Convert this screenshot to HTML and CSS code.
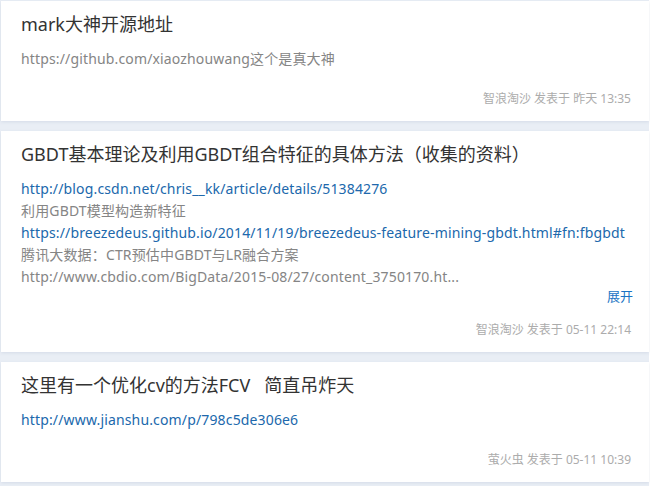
FILE: index.html
```html
<!DOCTYPE html>
<html lang="zh-CN">
<head>
<meta charset="utf-8">
<title>帖子列表</title>
<link rel="stylesheet" href="styles.css">
</head>
<body>
<div class="list">
  <div class="card">
    <div class="title">mark大神开源地址</div>
    <div class="content">
      <div class="line muted">https://github.com/xiaozhouwang这个是真大神</div>
    </div>
    <div class="meta">智浪淘沙 发表于 昨天 13:35</div>
  </div>
  <div class="card">
    <div class="title">GBDT基本理论及利用GBDT组合特征的具体方法（收集的资料）</div>
    <div class="content">
      <div class="line link">http://blog.csdn.net/chris__kk/article/details/51384276</div>
      <div class="line muted">利用GBDT模型构造新特征</div>
      <div class="line link">https://breezedeus.github.io/2014/11/19/breezedeus-feature-mining-gbdt.html#fn:fbgbdt</div>
      <div class="line muted">腾讯大数据：CTR预估中GBDT与LR融合方案</div>
      <div class="line muted">http://www.cbdio.com/BigData/2015-08/27/content_3750170.ht...</div>
      <div class="expand">展开</div>
    </div>
    <div class="meta">智浪淘沙 发表于 05-11 22:14</div>
  </div>
  <div class="card">
    <div class="title">这里有一个优化cv的方法FCV&nbsp;&nbsp;&nbsp;简直吊炸天</div>
    <div class="content">
      <div class="line link">http://www.jianshu.com/p/798c5de306e6</div>
    </div>
    <div class="meta">萤火虫 发表于 05-11 10:39</div>
  </div>
</div>
</body>
</html>
```

FILE: styles.css
```css
html, body {
  margin: 0;
  padding: 0;
  background: #ffffff;
}
body {
  font-family: "Noto Sans", "Noto Sans CJK SC", sans-serif;
}
.list {
  width: 648px;
  padding: 1px 0 4px 1px;
  background: #e9eef5;
  display: flex;
  flex-direction: column;
  gap: 10px;
}
.card {
  background: #fff;
  padding: 10px 18px 13px 20px;
  box-shadow: 0 1px 3px rgba(120, 140, 170, 0.18);
}
.title {
  font-size: 18px;
  line-height: 26px;
  color: #333;
  white-space: nowrap;
}
.content {
  margin-top: 11px;
  font-size: 14px;
  letter-spacing: 0.15px;
}
.line {
  line-height: 22px;
  white-space: nowrap;
}
.muted { color: #858585; }
.link { color: #2068ac; }
.expand {
  text-align: right;
  font-size: 13px;
  line-height: 16px;
  letter-spacing: 0;
  color: #1a73c4;
  margin-right: -2px;
  margin-bottom: -3px;
}
.meta {
  margin-top: 20px;
  text-align: right;
  font-size: 12px;
  line-height: 18px;
  color: #acacac;
}
```
